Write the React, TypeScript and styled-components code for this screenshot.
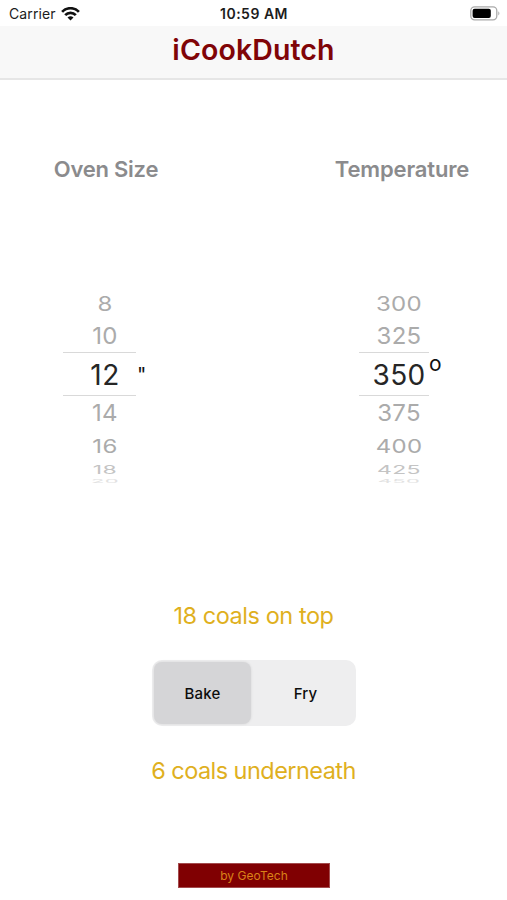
import React, { useState } from "react";
import styled, { createGlobalStyle } from "styled-components";

const GlobalStyle = createGlobalStyle`
  * { box-sizing: border-box; }
  body { margin: 0; background: #fff; font-family: Inter, "Liberation Sans", sans-serif; }
`;

const Screen = styled.div`
  width: 507px;
  height: 900px;
  overflow: hidden;
  display: flex;
  flex-direction: column;
  background: #fff;
`;

const StatusBar = styled.div`
  height: 26px;
  flex: none;
  display: grid;
  grid-template-columns: 1fr auto 1fr;
  align-items: center;
  padding: 2px 6px 0 9px;
  color: #1c1c1c;
`;

const Carrier = styled.div`
  display: flex;
  align-items: center;
  gap: 5px;
  font-size: 14px;
  letter-spacing: 0.12px;
  line-height: 20px;
  white-space: nowrap;
`;

const Clock = styled.div`
  font-size: 14px;
  font-weight: 600;
  line-height: 20px;
  letter-spacing: 0.5px;
  margin-right: 2px;
`;

const BatterySlot = styled.div`
  display: flex;
  justify-content: flex-end;
  padding-bottom: 1px;
`;

const NavBar = styled.header`
  height: 54px;
  flex: none;
  background: #f8f8f8;
  border-bottom: 2px solid #e6e6e6;
  display: flex;
  justify-content: center;
`;

const Title = styled.h1`
  margin: 0;
  font-size: 28.5px;
  font-weight: 600;
  line-height: 34px;
  padding-top: 7px;
  letter-spacing: 0.1px;
  color: #800407;
`;

const Pickers = styled.section`
  display: flex;
  justify-content: space-between;
  height: 420px;
  flex: none;
  padding-top: 75px;
`;

const Column = styled.div<{ $width: number }>`
  width: ${(p) => p.$width}px;
  display: flex;
  flex-direction: column;
`;

const Heading = styled.h2<{ $spacing: number }>`
  margin: 0;
  text-align: center;
  font-size: 22px;
  line-height: 28px;
  font-weight: 600;
  letter-spacing: ${(p) => p.$spacing}px;
  color: #8b8b8d;
`;

const WheelArea = styled.div<{ $indent: number }>`
  display: flex;
  margin-top: 103px;
  padding-left: ${(p) => p.$indent}px;
`;

const Wheel = styled.div<{ $width: number }>`
  width: ${(p) => p.$width}px;
`;

const WheelRow = styled.div<{ $height: number; $drop: number; $shift: number; $selected?: boolean }>`
  height: ${(p) => p.$height}px;
  display: flex;
  align-items: center;
  justify-content: center;
  padding-top: ${(p) => p.$drop}px;
  padding-left: ${(p) => p.$shift}px;
  border: solid #d9d9d9;
  border-width: ${(p) => (p.$selected ? "1px 0" : "0")};
`;

const WheelValue = styled.span<{ $size: number; $squash: number; $color: string; $spacing: number }>`
  font-size: ${(p) => p.$size}px;
  line-height: ${(p) => p.$size}px;
  letter-spacing: ${(p) => p.$spacing}px;
  color: ${(p) => p.$color};
  transform: scaleY(${(p) => p.$squash});
  white-space: nowrap;
`;

const Unit = styled.span<{ $top: number; $left: number; $size: number }>`
  margin: ${(p) => p.$top}px 0 0 ${(p) => p.$left}px;
  font-size: ${(p) => p.$size}px;
  line-height: 24px;
  height: 24px;
  color: #111;
`;

const Results = styled.section`
  display: flex;
  flex-direction: column;
  align-items: center;
  padding-top: 99px;
`;

const CoalCount = styled.p<{ $spacing: number }>`
  margin: 0;
  font-size: 23.5px;
  line-height: 34px;
  letter-spacing: ${(p) => p.$spacing}px;
  color: #dfb01e;
`;

const Segments = styled.div`
  width: 204px;
  height: 66px;
  margin: 27px 0 28px 1px;
  padding: 2px;
  display: grid;
  grid-template-columns: 97px 1fr;
  border-radius: 10px;
  background: #eeeeef;
`;

const Segment = styled.button<{ $active: boolean }>`
  border: 0;
  padding: 1px 0 0 ${(p) => (p.$active ? 0 : 6)}px;
  border-radius: 8px;
  background: ${(p) => (p.$active ? "#d5d5d7" : "transparent")};
  box-shadow: ${(p) => (p.$active ? "0 0 3px rgba(0, 0, 0, 0.1)" : "none")};
  font: 500 15px/20px Inter, "Liberation Sans", sans-serif;
  letter-spacing: 0.2px;
  color: #0d0d0d;
`;

const Credit = styled.footer`
  align-self: center;
  margin: 75px 0 0 1px;
  width: 152px;
  height: 25px;
  flex: none;
  background: #800002;
  border: 1px solid #a34b4d;
  color: #d98218;
  font-size: 12px;
  line-height: 24px;
  letter-spacing: 0.05px;
  text-align: center;
`;

const GREY = "#ababab";
const rows = [
  { height: 34, drop: 2, size: 24, squash: 0.82, color: GREY },
  { height: 32, drop: 0, size: 24, squash: 0.98, color: GREY },
  { height: 44, drop: 2, size: 28, squash: 1, color: "#262626" },
  { height: 34, drop: 0, size: 24, squash: 0.98, color: GREY },
  { height: 32, drop: 1, size: 24, squash: 0.8, color: GREY },
  { height: 15, drop: 1, size: 23, squash: 0.52, color: "#c4c4c4" },
  { height: 6, drop: 1, size: 22, squash: 0.24, color: "#e2e2e2" },
];

type PickerWheelProps = { values: string[]; width: number; shift: number; spacing: number };

function PickerWheel({ values, width, shift, spacing }: PickerWheelProps) {
  return (
    <Wheel $width={width}>
      {values.map((value, i) => {
        const row = rows[i];
        return (
          <WheelRow key={value} $height={row.height} $drop={row.drop} $shift={shift} $selected={i === 2}>
            <WheelValue $size={row.size} $squash={row.squash} $color={row.color} $spacing={spacing}>
              {value}
            </WheelValue>
          </WheelRow>
        );
      })}
    </Wheel>
  );
}

const WifiIcon = () => (
  <svg width="19" height="15" viewBox="0 0 19 15" fill="none" stroke="#111" strokeWidth="2.7">
    <path d="M1.1 4.9C5.7 0 13.3 0 17.9 4.9" />
    <path d="M4.2 8.2C7.1 5.1 11.9 5.1 14.8 8.2" />
    <path d="M6.5 10.6Q9.5 8 12.5 10.6L9.5 13.4Z" fill="#111" stroke="none" />
  </svg>
);

const BatteryIcon = () => (
  <svg width="31" height="15" viewBox="0 0 31 15">
    <rect x="0.8" y="0.9" width="26" height="13" rx="3.8" fill="#fff" stroke="#aaa" strokeWidth="1.3" />
    <rect x="2.6" y="2.7" width="18.2" height="9.4" rx="2" fill="#000" />
    <path d="M28.3 5.2Q30.5 7.4 28.3 9.6Z" fill="#aaa" />
  </svg>
);

export default function App() {
  const [mode, setMode] = useState("Bake");
  return (
    <>
      <GlobalStyle />
      <Screen>
        <StatusBar>
          <Carrier>
            Carrier <WifiIcon />
          </Carrier>
          <Clock>10:59 AM</Clock>
          <BatterySlot>
            <BatteryIcon />
          </BatterySlot>
        </StatusBar>
        <NavBar>
          <Title>iCookDutch</Title>
        </NavBar>
        <Pickers>
          <Column $width={212}>
            <Heading $spacing={-0.25}>Oven Size</Heading>
            <WheelArea $indent={63}>
              <PickerWheel values={["8", "10", "12", "14", "16", "18", "20"]} width={73} shift={11} spacing={0.4} />
              <Unit $top={77} $left={1} $size={20}>"</Unit>
            </WheelArea>
          </Column>
          <Column $width={210}>
            <Heading $spacing={-0.15}>Temperature</Heading>
            <WheelArea $indent={62}>
              <PickerWheel values={["300", "325", "350", "375", "400", "425", "450"]} width={70} shift={10} spacing={0.3} />
              <Unit $top={66} $left={0} $size={21}>o</Unit>
            </WheelArea>
          </Column>
        </Pickers>
        <Results>
          <CoalCount $spacing={-0.45}>18 coals on top</CoalCount>
          <Segments>
            {["Bake", "Fry"].map((name) => (
              <Segment key={name} $active={mode === name} onClick={() => setMode(name)}>
                {name}
              </Segment>
            ))}
          </Segments>
          <CoalCount $spacing={-0.55}>6 coals underneath</CoalCount>
        </Results>
        <Credit>by GeoTech</Credit>
      </Screen>
    </>
  );
}
